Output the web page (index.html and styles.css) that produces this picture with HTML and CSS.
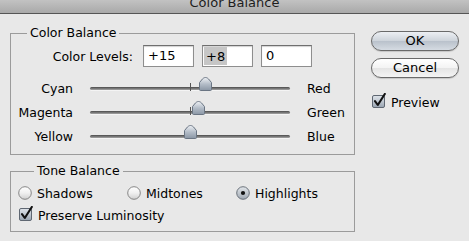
FILE: index.html
```html
<!DOCTYPE html>
<html>
<head>
<meta charset="utf-8">
<link rel="stylesheet" href="styles.css">
</head>
<body>
<div class="titlebar"><div class="title">Color Balance</div></div>
<div class="main">
  <div class="left">
    <fieldset class="group cb">
      <legend>Color Balance</legend>
      <div class="levels">
        <span class="lvl-label">Color Levels:</span>
        <span class="field">+15</span>
        <span class="field sel-field"><span class="sel">+8</span></span>
        <span class="field">0</span>
      </div>
      <div class="sliders">
        <div class="srow">
          <span class="sl-left">Cyan</span>
          <div class="track"><span class="tick"></span>
            <svg class="thumb" style="left:109px" width="13" height="14" viewBox="0 0 13 14"><defs><linearGradient id="tg1" x1="0" y1="0" x2="0" y2="1"><stop offset="0" stop-color="#eef1f5"/><stop offset=".5" stop-color="#b4bdc8"/><stop offset="1" stop-color="#8a96a5"/></linearGradient></defs><path d="M6.5 0.5C8 0.5 9.4 1.6 10.4 3L12.5 5.6V12.5Q12.5 13.5 11.5 13.5H1.5Q0.5 13.5 0.5 12.5V5.6L2.6 3C3.6 1.6 5 0.5 6.5 0.5Z" fill="url(#tg1)" stroke="#6a7583"/></svg>
          </div>
          <span class="sl-right">Red</span>
        </div>
        <div class="srow">
          <span class="sl-left">Magenta</span>
          <div class="track"><span class="tick"></span>
            <svg class="thumb" style="left:102px" width="13" height="14" viewBox="0 0 13 14"><path d="M6.5 0.5C8 0.5 9.4 1.6 10.4 3L12.5 5.6V12.5Q12.5 13.5 11.5 13.5H1.5Q0.5 13.5 0.5 12.5V5.6L2.6 3C3.6 1.6 5 0.5 6.5 0.5Z" fill="url(#tg1)" stroke="#6a7583"/></svg>
          </div>
          <span class="sl-right">Green</span>
        </div>
        <div class="srow">
          <span class="sl-left">Yellow</span>
          <div class="track"><span class="tick"></span>
            <svg class="thumb" style="left:94px" width="13" height="14" viewBox="0 0 13 14"><path d="M6.5 0.5C8 0.5 9.4 1.6 10.4 3L12.5 5.6V12.5Q12.5 13.5 11.5 13.5H1.5Q0.5 13.5 0.5 12.5V5.6L2.6 3C3.6 1.6 5 0.5 6.5 0.5Z" fill="url(#tg1)" stroke="#6a7583"/></svg>
          </div>
          <span class="sl-right">Blue</span>
        </div>
      </div>
    </fieldset>
    <fieldset class="group tb">
      <legend>Tone Balance</legend>
      <div class="radios">
        <label class="opt"><svg class="radio" width="14" height="14" viewBox="0 0 14 14"><defs><linearGradient id="rg" x1="0" y1="0" x2="0" y2="1"><stop offset="0" stop-color="#ffffff"/><stop offset=".5" stop-color="#f0f0f0"/><stop offset="1" stop-color="#cfcfcf"/></linearGradient><linearGradient id="rgs" x1="0" y1="0" x2="0" y2="1"><stop offset="0" stop-color="#e2e6ea"/><stop offset=".5" stop-color="#c2c8cf"/><stop offset="1" stop-color="#9ea7b2"/></linearGradient></defs><circle cx="7" cy="7" r="6.3" fill="url(#rg)" stroke="#7b7b7b" stroke-width="0.9"/></svg>Shadows</label>
        <label class="opt"><svg class="radio" width="14" height="14" viewBox="0 0 14 14"><circle cx="7" cy="7" r="6.3" fill="url(#rg)" stroke="#7b7b7b" stroke-width="0.9"/></svg>Midtones</label>
        <label class="opt"><svg class="radio" width="14" height="14" viewBox="0 0 14 14"><circle cx="7" cy="7" r="6.3" fill="url(#rgs)" stroke="#5f6670" stroke-width="0.9"/><circle cx="7" cy="7" r="2.1" fill="#111"/></svg>Highlights</label>
      </div>
      <label class="chk-row">
        <svg class="chk" width="15" height="15" viewBox="0 0 15 15"><defs><linearGradient id="cg" x1="0" y1="0" x2="0" y2="1"><stop offset="0" stop-color="#dfe4ea"/><stop offset=".5" stop-color="#bfc7d0"/><stop offset="1" stop-color="#98a3b0"/></linearGradient></defs><rect x="0.5" y="2.5" width="12" height="12" rx="1.5" fill="url(#cg)" stroke="#5f6772"/><path d="M3 8.2L5.8 12L12.8 1" fill="none" stroke="#111" stroke-width="2.1" stroke-linecap="round" stroke-linejoin="round"/></svg>
        Preserve Luminosity
      </label>
    </fieldset>
  </div>
  <div class="right">
    <div class="btn btn-ok">OK</div>
    <div class="btn btn-cancel">Cancel</div>
    <label class="chk-row preview">
      <svg class="chk" width="15" height="15" viewBox="0 0 15 15"><rect x="0.5" y="2.5" width="12" height="12" rx="1.5" fill="url(#cg)" stroke="#5f6772"/><path d="M3 8.2L5.8 12L12.8 1" fill="none" stroke="#111" stroke-width="2.1" stroke-linecap="round" stroke-linejoin="round"/></svg>
      Preview
    </label>
  </div>
</div>
</body>
</html>
```
FILE: styles.css
```css
html, body {
  margin: 0;
  padding: 0;
}
body {
  width: 469px;
  height: 241px;
  overflow: hidden;
  background: #e8e8e8;
  font-family: "DejaVu Sans", "Liberation Sans", sans-serif;
  font-size: 12.5px;
  color: #000;
}
.titlebar {
  height: 13px;
  border-bottom: 1px solid #555;
  background: linear-gradient(#c2c2c2, #a9a9a9);
  overflow: hidden;
  text-align: center;
}
.title {
  font-size: 13px;
  line-height: 13px;
  margin-top: -4px;
  color: #1e1e1e;
}
.main {
  display: flex;
  padding-left: 10px;
  gap: 16px;
}
.left {
  width: 345px;
  padding-top: 12px;
  display: flex;
  flex-direction: column;
  gap: 9px;
}
.group {
  margin: 0;
  padding: 0;
  border: 1px solid #9b9b9b;
  min-width: 0;
}
.group legend {
  margin-left: 16px;
  padding: 0 3px;
  line-height: 14px;
  height: 14px;
}
.cb {
  padding-bottom: 6px;
}
.levels {
  margin-top: 5px;
  display: flex;
  align-items: center;
  gap: 8px;
  height: 22px;
}
.lvl-label {
  width: 122px;
  text-align: right;
  margin-right: 2px;
}
.field {
  box-sizing: border-box;
  width: 51px;
  height: 22px;
  border: 1px solid #8e8e8e;
  border-top-color: #6f6f6f;
  background: #fff;
  box-shadow: inset 0 1px 1px rgba(0,0,0,0.18);
  padding-left: 4px;
  line-height: 20px;
  font-size: 13px;
}
.sel-field {
  padding-left: 1px;
}
.sel {
  display: inline-block;
  height: 18px;
  line-height: 20px;
  margin-top: 1px;
  vertical-align: top;
  padding: 0 2px;
  background: #c6c6c6;
}
.sliders {
  margin-top: 9px;
}
.srow {
  display: grid;
  grid-template-columns: 62px 200px auto;
  column-gap: 17px;
  align-items: center;
  height: 24px;
}
.sl-left {
  text-align: right;
}
.track {
  position: relative;
  height: 3px;
  margin-top: 1px;
  border-radius: 2px;
  background: linear-gradient(#4a4a4a, #7e7e7e 60%, #a8a8a8);
  box-shadow: 0 1px 0 #f4f4f4;
}
.tick {
  position: absolute;
  left: 100px;
  top: -4px;
  width: 1px;
  height: 8px;
  background: #555;
}
.thumb {
  position: absolute;
  top: -10px;
  display: block;
}
.tb {
  padding: 0 0 5px 7px;
}
.radios {
  margin-top: 4px;
  display: grid;
  grid-template-columns: 109px 109px auto;
  height: 22px;
  align-items: center;
}
.opt {
  display: flex;
  align-items: center;
  gap: 5px;
}
.radio {
  display: block;
}
.chk-row {
  display: flex;
  align-items: center;
  gap: 4px;
  height: 22px;
}
.tb .chk-row {
  padding-left: 1px;
}
.chk {
  display: block;
  margin-top: -3px;
}
.right {
  width: 88px;
  padding-top: 17px;
  display: flex;
  flex-direction: column;
}
.btn {
  box-sizing: border-box;
  height: 20px;
  border-radius: 10px;
  border: 1px solid #6a6a6a;
  text-align: center;
  line-height: 18px;
  font-size: 13px;
  box-shadow: 0 1px 1px rgba(0,0,0,0.15);
}
.btn-ok {
  background: linear-gradient(#eceff3, #cdd3da 50%, #b9c1cb 51%, #d5dbe2);
}
.btn-cancel {
  margin-top: 7px;
  background: linear-gradient(#ffffff, #f3f3f3 50%, #e4e4e4 51%, #f4f4f4);
}
.preview {
  margin-top: 13px;
  padding-left: 1px;
}
```
